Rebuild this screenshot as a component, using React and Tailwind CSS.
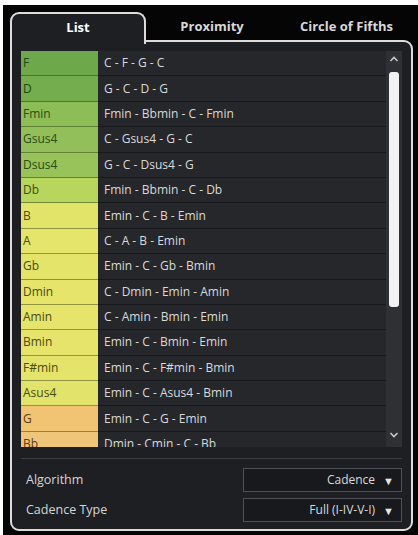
import React from "react";

const rows = [
  ["F", "C - F - G - C", "bg-[#6da84a]", "text-[#1f4712]"],
  ["D", "G - C - D - G", "bg-[#73ad4e]", "text-[#1f4712]"],
  ["Fmin", "Fmin - Bbmin - C - Fmin", "bg-[#8dbd57]", "text-[#2a4d15]"],
  ["Gsus4", "C - Gsus4 - G - C", "bg-[#92bf59]", "text-[#2a4d15]"],
  ["Dsus4", "G - C - Dsus4 - G", "bg-[#98c25a]", "text-[#2a4d15]"],
  ["Db", "Fmin - Bbmin - C - Db", "bg-[#b8d55e]", "text-[#3d4d12]"],
  ["B", "Emin - C - B - Emin", "bg-[#e2e46a]", "text-[#4a4a10]"],
  ["A", "C - A - B - Emin", "bg-[#e4e56a]", "text-[#4a4a10]"],
  ["Gb", "Emin - C - Gb - Bmin", "bg-[#e4e46b]", "text-[#4a4a10]"],
  ["Dmin", "C - Dmin - Emin - Amin", "bg-[#e6e46b]", "text-[#4a4a10]"],
  ["Amin", "C - Amin - Bmin - Emin", "bg-[#e6e46b]", "text-[#4a4a10]"],
  ["Bmin", "Emin - C - Bmin - Emin", "bg-[#e6e46b]", "text-[#4a4a10]"],
  ["F#min", "Emin - C - F#min - Bmin", "bg-[#e4e46a]", "text-[#4a4a10]"],
  ["Asus4", "Emin - C - Asus4 - Bmin", "bg-[#e2e36a]", "text-[#4a4a10]"],
  ["G", "Emin - C - G - Emin", "bg-[#f0c473]", "text-[#5a3d10]"],
  ["Bb", "Dmin - Cmin - C - Bb", "bg-[#efc57a]", "text-[#5a3d10]"],
];

function Dropdown({ label }) {
  return (
    <div className="w-[159px] h-[24px] border border-[#505156] bg-[#18191c] flex items-center justify-end pr-[7px] gap-[8px] text-[12px] text-[#dadada]">
      <span>{label}</span>
      <span className="text-[11px] text-[#e6e6e6] leading-none">▼</span>
    </div>
  );
}

export default function App() {
  return (
    <div
      className="w-[418px] h-[535px] bg-white pt-[5px] pl-[3px] overflow-hidden"
      style={{ fontFamily: '"Open Sans", "Noto Sans", sans-serif' }}
    >
      <div className="w-full h-full bg-[#050505] pt-[7px] pl-[7px] pr-[5px] pb-[4px] flex flex-col">
        {/* Tabs */}
        <div className="flex h-[30px] relative z-10 -mb-[2px]">
          <div className="w-[136px] h-[32px] border-2 border-b-0 border-[#dcdcdc] rounded-t-[9px] bg-[#1e1f23] flex items-center justify-center text-[13px] font-bold text-white pb-[2px]">
            List
          </div>
          <div className="w-[132px] flex items-center justify-center text-[13px] font-bold text-[#d8d8d8]">
            Proximity
          </div>
          <div className="flex-1 flex items-center justify-center text-[13px] font-bold text-[#d8d8d8] pl-[2px]">
            Circle of Fifths
          </div>
        </div>
        {/* Panel */}
        <div className="flex-1 border-2 border-[#dcdcdc] rounded-b-[9px] rounded-tr-[9px] bg-[#1e1f23] pt-[9px] px-[9px] flex flex-col">
          <div className="flex h-[396px] overflow-hidden">
            <div className="flex-1 overflow-hidden">
              {rows.map(([chord, prog, bg, tc]) => (
                <div key={chord} className="flex h-[25.4px]">
                  <div
                    className={`w-[77px] shrink-0 ${bg} ${tc} border-b border-[rgba(40,50,10,0.45)] flex items-center pl-[2px] text-[12px]`}
                  >
                    {chord}
                  </div>
                  <div className="flex-1 bg-[#25272b] border-b border-[#17181b] flex items-center pl-[6px] text-[12px] text-[#dadada]">
                    {prog}
                  </div>
                </div>
              ))}
            </div>
            {/* Scrollbar */}
            <div className="w-[16px] shrink-0 bg-[#2e3034] flex flex-col items-center relative">
              <svg width="10" height="6" viewBox="0 0 10 6" className="mt-[5px]">
                <path d="M1.5 5 L5 1.5 L8.5 5" stroke="#c8c8c8" strokeWidth="1.6" fill="none" />
              </svg>
              <div className="w-[10px] h-[235px] bg-[#f2f2f2] rounded-[3px] mt-[10px]" />
              <div className="flex-1" />
              <svg width="10" height="6" viewBox="0 0 10 6" className="mb-[9px]">
                <path d="M1.5 1 L5 4.5 L8.5 1" stroke="#c8c8c8" strokeWidth="1.6" fill="none" />
              </svg>
            </div>
          </div>
          <div className="h-[11px]" />
          <div className="h-px bg-[#3a3b40]" />
          <div className="flex items-center justify-between mt-[9px] pl-[5px]">
            <span className="text-[12.5px] text-[#d6d6d6]">Algorithm</span>
            <Dropdown label="Cadence" />
          </div>
          <div className="flex items-center justify-between mt-[6px] pl-[5px]">
            <span className="text-[12.5px] text-[#d6d6d6]">Cadence Type</span>
            <Dropdown label="Full (I-IV-V-I)" />
          </div>
        </div>
      </div>
    </div>
  );
}
